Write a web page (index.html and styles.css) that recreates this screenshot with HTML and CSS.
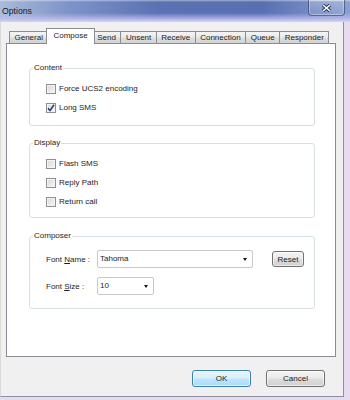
FILE: index.html
```html
<!DOCTYPE html>
<html>
<head>
<title>Options</title>
<link rel="stylesheet" href="styles.css">
</head>
<body>
<div class="window">
  <div class="titlebar">
    <span class="title">Options</span>
    <span class="close">
      <svg width="11" height="8" viewBox="0 0 11 8">
        <path d="M2 1 L9 7 M9 1 L2 7" stroke="#2a3350" stroke-width="3.4" fill="none"/>
        <path d="M2 1 L9 7 M9 1 L2 7" stroke="#ffffff" stroke-width="1.6" fill="none"/>
      </svg>
    </span>
  </div>
  <div class="client">
    <div class="tabs">
      <div class="tab">General</div>
      <div class="tab active">Compose</div>
      <div class="tab">Send</div>
      <div class="tab">Unsent</div>
      <div class="tab">Receive</div>
      <div class="tab">Connection</div>
      <div class="tab">Queue</div>
      <div class="tab">Responder</div>
    </div>
    <div class="panel">
      <fieldset class="group">
        <legend>Content</legend>
        <div class="group-body content-body">
          <label class="check"><span class="box"></span>Force UCS2 encoding</label>
          <label class="check"><span class="box"><svg width="8" height="8" viewBox="0 0 8 8"><path d="M1 4.2 L3 6.6 L7 0.8" stroke="#27367a" stroke-width="1.5" fill="none"/></svg></span>Long SMS</label>
        </div>
      </fieldset>
      <fieldset class="group display">
        <legend>Display</legend>
        <div class="group-body display-body">
          <label class="check"><span class="box"></span>Flash SMS</label>
          <label class="check"><span class="box"></span>Reply Path</label>
          <label class="check"><span class="box"></span>Return call</label>
        </div>
      </fieldset>
      <fieldset class="group composer">
        <legend>Composer</legend>
        <div class="group-body composer-body">
          <div class="field">
            <span class="field-label">Font <u>N</u>ame :</span>
            <div class="combo combo-wide">Tahoma<span class="arrow"></span></div>
            <button class="btn reset">Reset</button>
          </div>
          <div class="field">
            <span class="field-label">Font <u>S</u>ize :</span>
            <div class="combo combo-small">10<span class="arrow"></span></div>
          </div>
        </div>
      </fieldset>
    </div>
    <div class="actions">
      <button class="btn btn-big btn-default">OK</button>
      <button class="btn btn-big">Cancel</button>
    </div>
  </div>
</div>
</body>
</html>
```

FILE: styles.css
```css
body {
    margin: 0;
    width: 350px;
    height: 400px;
    overflow: hidden;
    font-family: "Liberation Sans", Arial, sans-serif;
    font-size: 8px;
    color: #1c1c1c;
}

.window {
    width: 350px;
    height: 400px;
    background: #e6dbf1;
}

.titlebar {
    display: flex;
    align-items: flex-start;
    height: 22px;
    background:
      linear-gradient(to bottom, rgba(255,255,255,0.45) 0, rgba(255,255,255,0) 2px, rgba(255,255,255,0) 13px, rgba(190,190,240,0.7) 18px, #cbc8ef 21px, #dcd6ee 22px),
      linear-gradient(to right, #a9bbd8, #7d93c8 20%, #5b72b3 45%, #5870b2 75%, #8ba0d2);
}

.title {
    padding-left: 2px;
    line-height: 22px;
    font-size: 8.7px;
    color: #1a1a2a;
}

.close {
    display: flex;
    align-items: center;
    justify-content: center;
    margin-left: auto;
    margin-right: 5px;
    width: 35px;
    height: 15px;
    border: 1px solid rgba(40,50,90,0.6);
    border-top: none;
    border-radius: 0 0 4px 4px;
    background: linear-gradient(to bottom, rgba(255,255,255,0.25), rgba(255,255,255,0.05));
    box-shadow: inset 0 0 0 1px rgba(255,255,255,0.3);
}

.client {
    box-sizing: border-box;
    width: 344px;
    height: 375px;
    padding: 6px 7px 0 5px;
    background: #f0f0f0;
    border-left: 1px solid #dadada;
    border-right: 1px solid #8e8e9c;
    border-bottom: 1px solid #8e8e9c;
}

.tabs {
    display: flex;
    align-items: flex-end;
    height: 15px;
    padding-left: 3px;
}

.tab {
    box-sizing: border-box;
    height: 12px;
    padding: 0 4.5px;
    margin-left: -1px;
    line-height: 11px;
    border: 1px solid #898c95;
    border-bottom: none;
    background: linear-gradient(to bottom, #f3f3f3, #ebebeb 45%, #dddddd 55%, #d3d3d3);
    white-space: nowrap;
}

.tab:first-child {
    margin-left: 0;
}

.tab.active {
    position: relative;
    z-index: 1;
    height: 16px;
    margin: 0 -2px -1px -2px;
    padding: 0 6px;
    line-height: 13px;
    background: #ffffff;
}

.panel {
    box-sizing: border-box;
    height: 314px;
    padding-top: 19px;
    background: #ffffff;
    border: 1px solid #898c95;
}

.group {
    margin: 0 20px 0 22px;
    padding: 0;
    border: 1px solid #d5dfe5;
    border-radius: 3px;
}

.group legend {
    margin-left: 3px;
    padding: 0 1px;
    line-height: 10px;
    color: #1e1e1e;
}

.display {
    margin-top: 12px;
}

.composer {
    margin-top: 13px;
}

.group-body {
    padding-left: 16px;
}

.content-body {
    padding-top: 6px;
    padding-bottom: 8px;
}

.display-body {
    padding-top: 6px;
    padding-bottom: 6px;
}

.composer-body {
    display: flex;
    flex-direction: column;
    gap: 9px;
    padding-top: 9px;
    padding-bottom: 13px;
}

.check {
    display: flex;
    align-items: center;
    gap: 3px;
    height: 19px;
}

.box {
    box-sizing: border-box;
    display: flex;
    align-items: center;
    justify-content: center;
    width: 10px;
    height: 10px;
    border: 1px solid #8f8f8f;
    background: linear-gradient(135deg, #d8d8d8, #f6f6f6);
    box-shadow: inset 0 0 0 1px #f4f4f4;
}

.field {
    display: flex;
    align-items: center;
    height: 18px;
}

.field-label {
    width: 51px;
}

.combo {
    box-sizing: border-box;
    position: relative;
    height: 18px;
    padding-left: 2px;
    line-height: 16px;
    background: #ffffff;
    border: 1px solid #c5c9d0;
    border-radius: 2px;
}

.combo-wide {
    width: 156px;
}

.combo-small {
    width: 57px;
}

.arrow {
    position: absolute;
    right: 5px;
    top: 7px;
    width: 0;
    height: 0;
    border-left: 2.5px solid transparent;
    border-right: 2.5px solid transparent;
    border-top: 3px solid #111111;
}

.btn {
    box-sizing: border-box;
    padding: 0;
    font-family: "Liberation Sans", Arial, sans-serif;
    font-size: 8px;
    color: #1c1c1c;
    border: 1px solid #707070;
    border-radius: 3px;
    background: linear-gradient(to bottom, #f4f4f4, #ebebeb 45%, #dddddd 55%, #cfcfcf);
    box-shadow: inset 0 0 0 1px rgba(255,255,255,0.6);
}

.reset {
    width: 32px;
    height: 16px;
    margin-left: 19px;
}

.actions {
    display: flex;
    justify-content: flex-end;
    gap: 15px;
    margin-top: 13px;
    padding-right: 11px;
}

.btn-big {
    width: 59px;
    height: 17px;
}

.btn-default {
    border-color: #3c7fb1;
    background: linear-gradient(to bottom, #eaf6fd, #d9f0fc 45%, #bee6fd 55%, #a7d9f5);
    box-shadow: inset 0 0 0 1px rgba(255,255,255,0.7);
}
```
